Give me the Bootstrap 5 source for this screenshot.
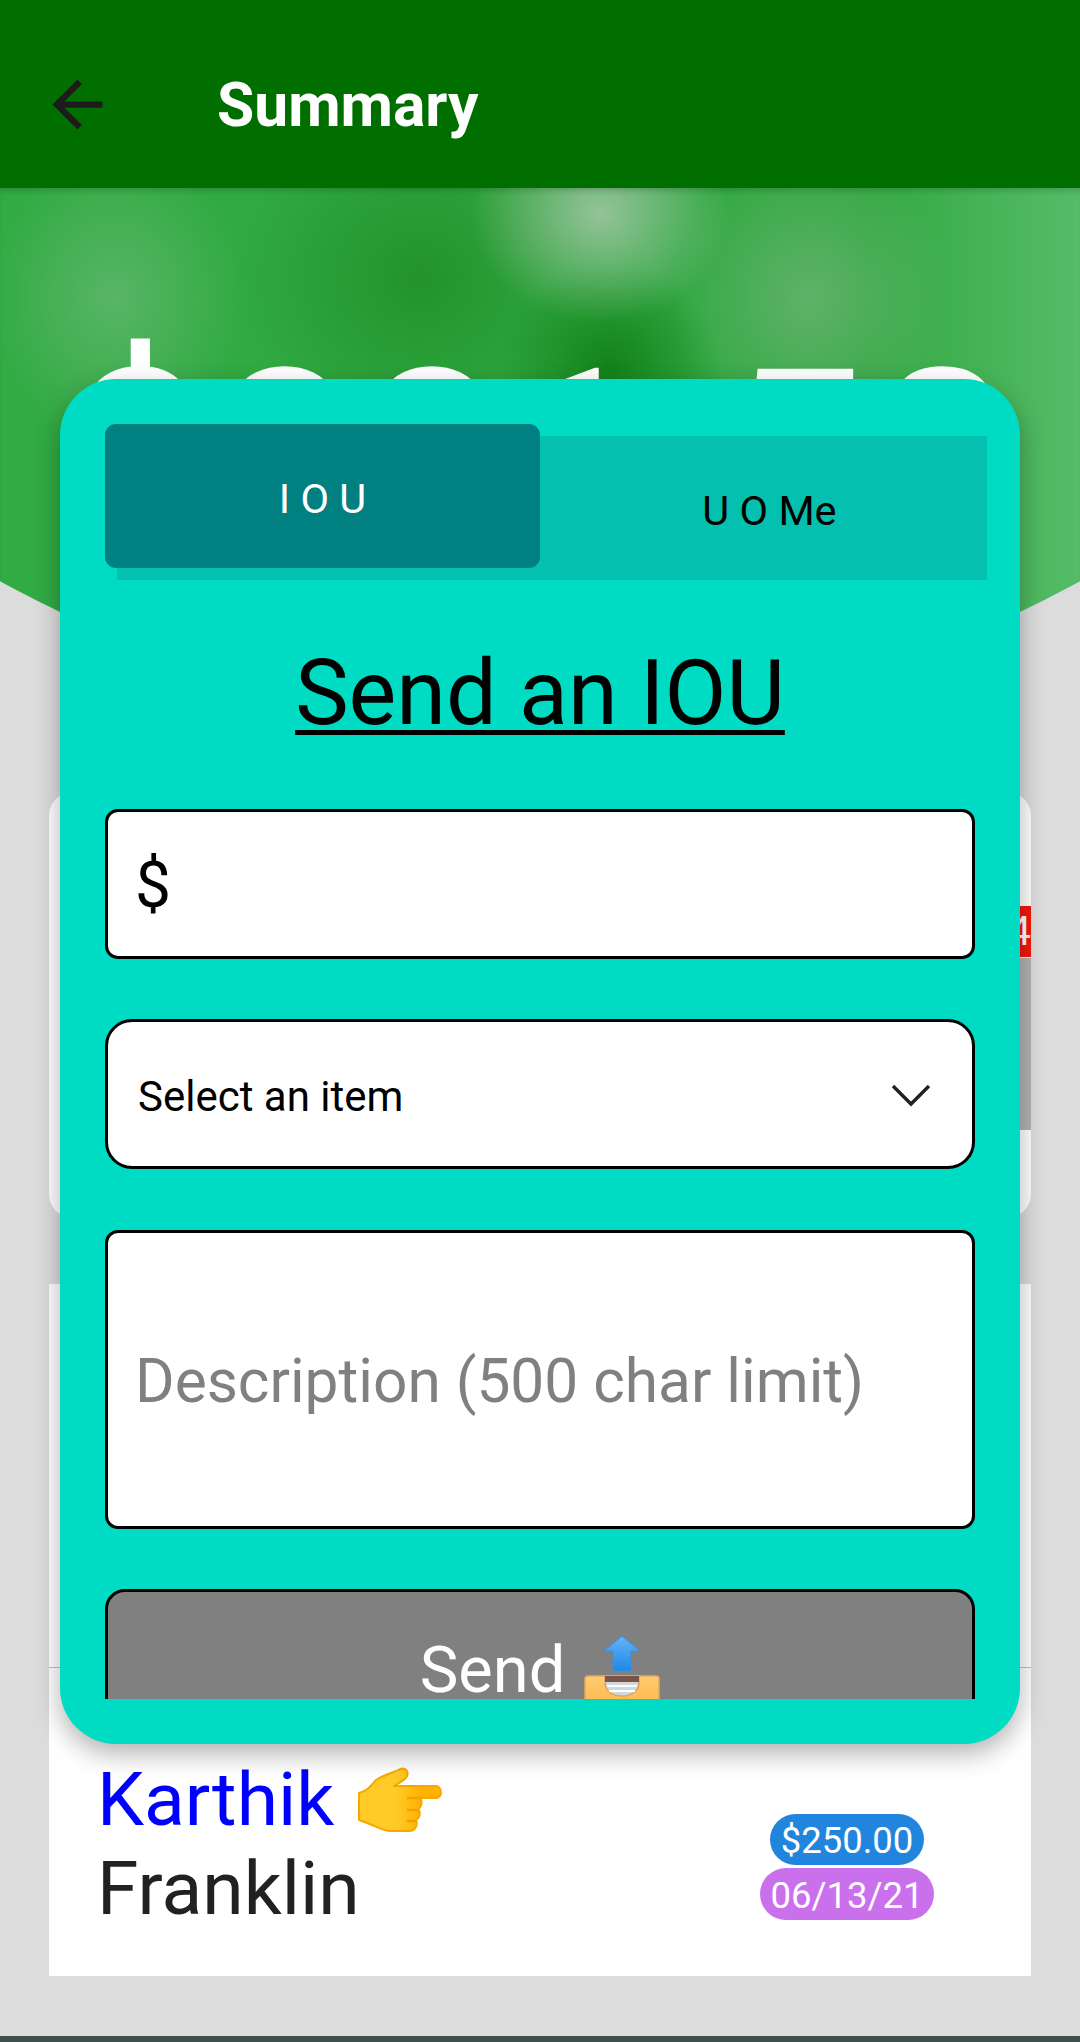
<!DOCTYPE html>
<html lang="en">
<head>
  <meta charset="UTF-8">
  <title>Summary</title>
  <link href="https://cdn.jsdelivr.net/npm/bootstrap@5.3.3/dist/css/bootstrap.min.css" rel="stylesheet">
  <style>
    html, body { width: 1080px; height: 2042px; overflow: hidden; }
    body { position: relative; background: #dcdcdc; font-family: Roboto, "Liberation Sans", sans-serif; color: #212121; }
    .top-bar { height: 188px; background: #006f00; padding: 21px 0 0 40px; position: relative; z-index: 2; }
    .top-bar svg { width: 75px; height: 75px; margin-top: -1px; }
    .top-title { margin: 4px 0 0 102px; font-size: 60.5px; font-weight: 700; color: #fff; line-height: 1; }
    .hero {
      height: 532px; overflow: hidden; text-align: center;
      clip-path: circle(1120px at 50% -588px);
      background:
        radial-gradient(ellipse 130px 110px at 600px 25px, rgba(190,205,190,.7), rgba(190,205,190,0)),
        radial-gradient(ellipse 130px 150px at 115px 110px, rgba(120,190,130,.55), rgba(120,190,130,0)),
        radial-gradient(ellipse 140px 150px at 810px 110px, rgba(125,185,130,.6), rgba(125,185,130,0)),
        radial-gradient(ellipse 110px 110px at 610px 180px, rgba(15,125,20,.9), rgba(15,125,20,0)),
        radial-gradient(ellipse 190px 170px at 420px 90px, rgba(30,140,35,.75), rgba(30,140,35,0)),
        linear-gradient(90deg, #31ab43 0%, #32a842 80%, #55bc68 100%);
      box-shadow: inset 0 6px 6px -4px rgba(0,0,0,.2);
    }
    .hero-amount { font-size: 262px; font-weight: 400; line-height: 1; color: #fff; padding-top: 147px; white-space: nowrap; }
    .stat-box { width: 982px; height: 426px; margin: 72px 0 0 49px; background: #fff; border-radius: 24px; overflow: hidden; }
    .stat-red { height: 52px; margin: 114px 0 0 50%; background: #f5170c; color: #fff; font-size: 40px; line-height: 52px; text-align: right; border-bottom: 1px solid #f5f5f5; }
    .stat-grey { height: 172px; margin-left: 50%; background: #b3b3b3; }
    .feed { width: 982px; height: 692px; margin: 66px 0 0 49px; background: #fff; }
    .feed-gap { height: 384px; border-bottom: 1px solid #bdbdbd; }
    .feed-row { height: 308px; padding: 87px 97px 0 48px; }
    .person { font-size: 75px; line-height: 89px; }
    .person-link { color: #0000ff; }
    .person-link svg { width: 88px; height: 68px; vertical-align: -10px; margin-left: 23px; }
    .pills { width: 174px; padding-top: 59px; }
    .pill-tag { display: block; height: 51px; line-height: 54px; margin-bottom: 3px; border-radius: 26px; color: #fff; font-size: 36.5px; text-align: center; }
    .pill-amt { width: 154px; margin-left: 10px; background: #2185de; }
    .pill-date { width: 174px; height: 52px; line-height: 56px; background: #cb70ec; }
    .end-bar { height: 6px; margin-top: 60px; background: #424d4f; }

    .sheet {
      position: absolute; left: 60px; top: 379px; width: 960px; height: 1365px;
      padding: 45px 33px 45px 45px; background: #00dbc4; border-radius: 56px;
      box-shadow: 0 10px 26px rgba(0,0,0,.3); z-index: 3;
    }
    .sheet-body { height: 1275px; overflow: hidden; }
    .tabs-strip { margin: 12px 0 0 12px; height: 144px; background: #04c0ae; }
    .tab-item { width: 435px; height: 144px; font-size: 41.5px; line-height: 149px; text-align: center; }
    .tab-on { margin: -12px 12px 12px -12px; background: #008080; color: #fff; border-radius: 11px; }
    .tab-off { color: #000; }
    .sheet-title { margin: 60px 12px 0 0; font-size: 90px; line-height: 107px; font-weight: 400; text-align: center; color: #000; text-decoration: underline; text-decoration-thickness: 5px; text-underline-offset: 6px; }
    .field { width: 870px; background: #fff; border: 3px solid #000 !important; color: #000; }
    .field-money { height: 150px; margin-top: 62px; border-radius: 13px; padding: 3px 27px 0; font-size: 64px; }
    .field-pick { height: 150px; margin-top: 60px; border-radius: 27px; padding: 4px 40px 0 30px; font-size: 42px; }
    .field-pick svg { width: 42px; height: 26px; margin-top: -2px; }
    .field-text { height: 299px; margin-top: 61px; border-radius: 13px; padding: 5px 27px 0; font-size: 60.4px; color: #808080; }
    .send-btn { width: 870px; height: 158px; margin-top: 60px; padding: 3px 0 0; background: #808080; border: 3px solid #000; border-radius: 20px; color: #fff; font-size: 65px; line-height: 1.05; }
    .send-btn svg { width: 76px; height: 70px; margin-left: 19px; vertical-align: -13px; }
  </style>
</head>
<body>

<header class="top-bar d-flex align-items-center">
  <svg viewBox="0 0 24 24" fill="#1c1c1c"><path d="M20 11H7.83l5.59-5.59L12 4l-8 8 8 8 1.41-1.41L7.83 13H20v-2z"/></svg>
  <h1 class="top-title">Summary</h1>
</header>

<section class="hero">
  <div class="hero-amount">$881.50</div>
</section>

<div class="stat-box">
  <div class="stat-red">4</div>
  <div class="stat-grey"></div>
</div>

<div class="feed">
  <div class="feed-gap"></div>
  <div class="feed-row d-flex justify-content-between">
    <div>
      <div class="person person-link">Karthik<svg viewBox="0 0 88 68"><defs><linearGradient id="handFill" x1="0" x2="1"><stop offset=".45" stop-color="#ffca28"/><stop offset=".75" stop-color="#ffb300"/></linearGradient></defs><path d="M2 26c8-2 12-7 17-13C26 8 36 6 43 2c5-2 9 2 7 7-1 4-8 7-13 10h42c6 0 7 12 0 12H62c4 2 3 9-1 11 3 3 2 9-2 11 2 4 0 11-7 11H34c-8 0-15-5-24-8l-8-3z" fill="url(#handFill)" stroke="#f5a800" stroke-width="2" stroke-linejoin="round"/><path d="M50 31h14M50 43h12M50 54h9" stroke="#f5a000" stroke-width="2.5" fill="none"/></svg></div>
      <div class="person">Franklin</div>
    </div>
    <div class="pills">
      <span class="pill-tag pill-amt">$250.00</span>
      <span class="pill-tag pill-date">06/13/21</span>
    </div>
  </div>
</div>

<div class="end-bar"></div>

<div class="sheet">
  <div class="sheet-body">
    <div class="tabs-strip d-flex">
      <div class="tab-item tab-on">I O U</div>
      <div class="tab-item tab-off">U O Me</div>
    </div>
    <h2 class="sheet-title">Send an IOU</h2>
    <div class="field field-money d-flex align-items-center">$</div>
    <div class="field field-pick d-flex align-items-center justify-content-between">
      <span>Select an item</span>
      <svg viewBox="0 0 42 26" fill="none" stroke="#222" stroke-width="3.4"><path d="M3 4l18 18L39 4"/></svg>
    </div>
    <div class="field field-text d-flex align-items-center">Description (500 char limit)</div>
    <button type="button" class="send-btn d-block">Send<svg viewBox="0 0 76 70"><defs><linearGradient id="arrowFill" x1="0" x2="0" y1="0" y2="1"><stop offset="0" stop-color="#64b5f6"/><stop offset="1" stop-color="#1e88e5"/></linearGradient><linearGradient id="trayFill" x1="0" x2="0" y1="0" y2="1"><stop offset="0" stop-color="#ffcc70"/><stop offset="1" stop-color="#ffb74d"/></linearGradient></defs><path d="M38 1l18 15H47v20H29V16H20z" fill="url(#arrowFill)" stroke="#3d8fe0" stroke-width="1"/><rect x="1" y="41" width="74" height="30" rx="3" fill="url(#trayFill)" stroke="#e8a85a" stroke-width="1.5"/><path d="M21 41h34v6c0 10-8 14-17 14s-17-4-17-14z" fill="#cfd8dc" stroke="#dfa45c" stroke-width="1.5"/><path d="M21 41h34v6H21z" fill="#795548"/><path d="M23 51h30M25 56h26" stroke="#fff" stroke-width="2"/></svg></button>
  </div>
</div>

<script src="https://cdn.jsdelivr.net/npm/bootstrap@5.3.3/dist/js/bootstrap.bundle.min.js"></script>
</body>
</html>
